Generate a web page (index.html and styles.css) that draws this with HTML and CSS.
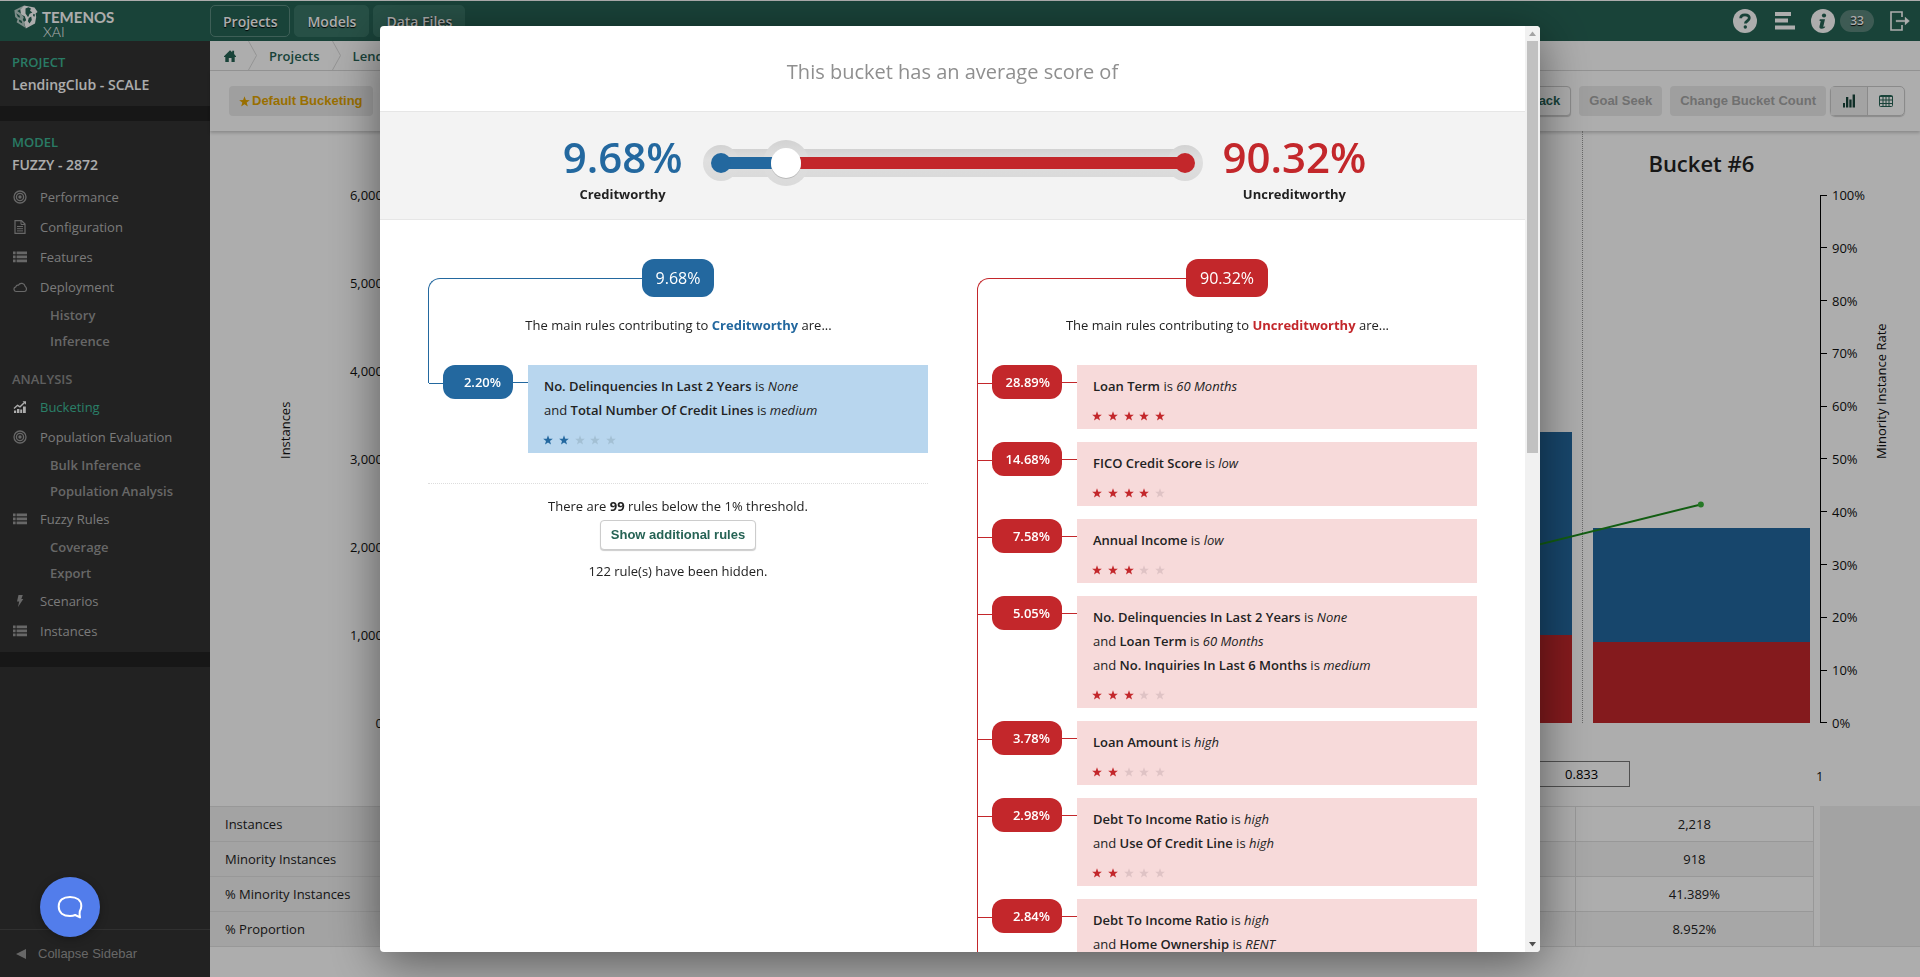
FILE: index.html
```html
<!DOCTYPE html>
<html lang="en">
<head>
<meta charset="utf-8">
<title>Temenos XAI - Bucketing</title>
<link rel="stylesheet" href="styles.css">
</head>
<body>
<svg class="sprite" aria-hidden="true">
  <symbol id="star" viewBox="0 0 20 20"><path d="M10 0.500l2.500 6.800 7.200.2-5.700 4.400 2 7L10 14.800l-6 4.100 2-7L.3 7.500l7.200-.2z"/></symbol>
  <symbol id="target" viewBox="0 0 14 14"><g fill="none" stroke="currentColor" stroke-width="1.300"><circle cx="7" cy="7" r="6"/><circle cx="7" cy="7" r="3.600"/></g><circle cx="7" cy="7" r="1.700"/></symbol>
  <symbol id="list" viewBox="0 0 14 14"><path d="M0 1.500h2.600v2.800H0zM3.600 1.500H14v2.800H3.600zM0 5.500h2.600v2.800H0zM3.600 5.500H14v2.800H3.600zM0 9.500h2.600v2.800H0zM3.600 9.500H14v2.800H3.600z"/></symbol>
  <symbol id="doc" viewBox="0 0 14 14"><path d="M2 .7h6.500L12 4v9.300H2z" fill="none" stroke="currentColor" stroke-width="1.200"/><path d="M8 .7V4.500h4M4 6.500h6M4 8.700h6M4 10.900h6" fill="none" stroke="currentColor"/></symbol>
  <symbol id="cloud" viewBox="0 0 14 14"><path d="M3 11.500a2.400 2.400 0 0 1-.2-4.700 2.300 2.300 0 0 1 2.600-1.600 3.600 3.600 0 0 1 6.700 1.200c1.200 1 1.500 2.300 1.300 3.300-.2 1.200-1 1.800-2 1.800z" fill="none" stroke="currentColor" stroke-width="1.200"/></symbol>
  <symbol id="trend" viewBox="0 0 14 14"><path d="M1 10.500h2.200V13H1zM4 9h2.400v4H4zM7.200 9.500h2V13h-2zM10 6.500h2.800V13H10z"/><path d="M1 8.500l3.500-3.200 2.500 1.500L11.500 2.500" fill="none" stroke="currentColor" stroke-width="1.400"/><path d="M9.500 1.300h3.500v3.400z"/></symbol>
  <symbol id="bolt" viewBox="0 0 14 14"><path d="M5.500 1h4.300L8.300 5h2L5 13l1.200-5.400H4z"/></symbol>
</svg>

<div class="app">
  <header class="topbar">
    <div class="brand">
      <svg class="cube" viewBox="0 0 24 24"><path fill="#fff" d="M10 .4L20.500 2.600 23.600 7l-2 1.500.6 3.500-1.200 6.500L11.800 23.500 10 17l2.200-1.800-1.500-4L7 9.500 6.200 4z"/><path fill="#266355" d="M11.500 3.500l3-1.300 2.400 1.300-.8 2.200 2.300 1.800-2.800 1.300-1.500 3.400-2.600-3.600zM14.800 13l2.400-1.600.6 3.600-2.300 3.500-1.600-2.300zM19.300 8.800l1.700.7-.5 2.200-1.400-.6z"/><path fill="#b9cfc9" d="M.4 5.200L9.500.8l-2 3-4.300 2.300 4 2.600 2.600 3.600-1 2.400 1.600 2.700.6 5.200L2.600 17.300l1-3L1.200 12z"/><path fill="#266355" d="M2.200 8.300l3.300 2.300.7 2.200-2.300-.7zM4.800 14.500l2.800 1.200.8 2.800-3-1.600z"/></svg>
      <div class="wordmark"><span class="name">TEMENOS</span><span class="product">XAI</span></div>
    </div>
    <nav class="tabs">
      <a class="tab current" href="#">Projects</a>
      <a class="tab" href="#">Models</a>
      <a class="tab" href="#">Data Files</a>
    </nav>
    <div class="tools">
      <button class="tool" aria-label="Help"><svg width="24" height="24" viewBox="0 0 24 24"><circle cx="12" cy="12" r="12" fill="#fff"/><path d="M7.700 9.300C7.700 6.700 9.600 5.800 12 5.800c2.500 0 4.300 1.200 4.300 3.300 0 3-3.900 2.700-3.900 5.400" fill="none" stroke="#266355" stroke-width="2.800"/><circle cx="12.300" cy="18" r="1.700" fill="#266355"/></svg></button>
      <button class="tool" aria-label="Log"><svg width="20" height="18" viewBox="0 0 20 18"><path fill="#fff" d="M0 0h16v4H0zM0 6.500h13v4H0zM0 13.500h20v4H0z"/></svg></button>
      <button class="tool info" aria-label="Information, 33 messages"><svg width="24" height="24" viewBox="0 0 24 24"><circle cx="12" cy="12" r="12" fill="#fff"/><circle cx="13" cy="6.500" r="2.100" fill="#266355"/><path d="M8.800 10.200h5.200l-1.700 7.200q-.2 1 1.900-.2l-.3 1.300q-2 1.400-3.600 1.300-2.300-.2-1.800-2.500l1.200-5.300H8.500z" fill="#266355"/></svg><span class="count">33</span></button>
      <button class="tool" aria-label="Log out"><svg width="20" height="20" viewBox="0 0 20 20" fill="none" stroke="#fff" stroke-width="1.600"><path d="M12 6V1H1v18h11v-5"/><path d="M6 9.200h9V6l4.500 4-4.500 4v-3.200H6z" fill="#fff" stroke-width=".3"/></svg></button>
    </div>
  </header>

  <aside class="sidebar">
    <section class="block"><h2 class="kind">PROJECT</h2><p class="title">LendingClub - SCALE</p></section>
    <section class="block model">
      <h2 class="kind">MODEL</h2><p class="title">FUZZY - 2872</p>
      <nav class="menu">
        <a href="#"><svg><use href="#target"/></svg>Performance</a>
        <a href="#"><svg><use href="#doc"/></svg>Configuration</a>
        <a href="#"><svg><use href="#list"/></svg>Features</a>
        <a href="#"><svg><use href="#cloud"/></svg>Deployment</a>
        <a class="sub" href="#">History</a>
        <a class="sub" href="#">Inference</a>
        <h2 class="group">ANALYSIS</h2>
        <a class="active" href="#"><svg><use href="#trend"/></svg>Bucketing</a>
        <a href="#"><svg><use href="#target"/></svg>Population Evaluation</a>
        <a class="sub" href="#">Bulk Inference</a>
        <a class="sub" href="#">Population Analysis</a>
        <a href="#"><svg><use href="#list"/></svg>Fuzzy Rules</a>
        <a class="sub" href="#">Coverage</a>
        <a class="sub" href="#">Export</a>
        <a href="#"><svg><use href="#bolt"/></svg>Scenarios</a>
        <a href="#"><svg><use href="#list"/></svg>Instances</a>
      </nav>
    </section>
    <button class="collapse"><svg width="10" height="10" viewBox="0 0 10 10"><path d="M0 5L10 0v10z"/></svg>Collapse Sidebar</button>
  </aside>

  <main class="main">
    <nav class="crumbs">
      <a href="#" aria-label="Home"><svg width="12" height="12" viewBox="0 0 12 12"><path d="M6 .3l2.200 2V.8h1.900v3.200L12 6.200v.8h-1.300V12H7.500V8H4.800v4H1.300V7H0v-.8z"/></svg></a>
      <svg class="sep" viewBox="0 0 9 29"><path d="M.5 0L8.500 14.500.5 29"/></svg>
      <a href="#">Projects</a>
      <svg class="sep" viewBox="0 0 9 29"><path d="M.5 0L8.500 14.500.5 29"/></svg>
      <a href="#">LendingClub - SCALE</a>
    </nav>
    <div class="toolbar">
      <button class="btn muted gold"><svg width="11" height="11"><use href="#star"/></svg>Default Bucketing</button>
      <div class="right">
        <button class="btn">Feedback</button>
        <button class="btn muted">Goal Seek</button>
        <button class="btn muted">Change Bucket Count</button>
        <div class="toggle">
          <button class="pressed" aria-label="Chart view"><svg width="14" height="14" viewBox="0 0 14 14"><path d="M1 9h2v4.500H1zM4 3h2.300v10.500H4zM7.300 5.500h2.300v8H7.300zM10.600.5H13v13h-2.400z"/></svg></button>
          <button aria-label="Table view"><svg width="14" height="14" viewBox="0 0 14 14" fill="none" stroke="currentColor"><rect x=".5" y="1.500" width="13" height="11" rx="1"/><path d="M.5 2.500h13M.5 6h13M.5 9.500h13M4 3v9.500M7 3v9.500M10 3v9.500"/></svg></button>
        </div>
      </div>
    </div>

    <section class="chart">
      <div class="axis-left"><span class="axis-name">Instances</span>
        <ul class="ticks"><li>6,000</li><li>5,000</li><li>4,000</li><li>3,000</li><li>2,000</li><li>1,000</li><li>0</li></ul>
      </div>
      <div class="buckets">
        <div class="bucket"></div><div class="bucket"></div><div class="bucket"></div><div class="bucket"></div>
        <div class="bucket"><div class="stack"><div class="major" style="height:38.450%"></div><div class="minor" style="height:16.670%"></div></div></div>
        <div class="bucket"><h3>Bucket #6</h3><div class="stack"><div class="major" style="height:21.670%"></div><div class="minor" style="height:15.300%"></div></div></div>
      </div>
      <svg class="rate" viewBox="0 0 600 100" preserveAspectRatio="none"><path d="M450 69.800L550 58.600"/><path class="dot" d="M550 58.600h.01"/></svg>
      <div class="axis-right">
        <ul class="ticks"><li>100%</li><li>90%</li><li>80%</li><li>70%</li><li>60%</li><li>50%</li><li>40%</li><li>30%</li><li>20%</li><li>10%</li><li>0%</li></ul>
        <span class="axis-name">Minority Instance Rate</span>
      </div>
      <div class="cuts"><input class="cut" aria-label="Bucket boundary" value="0.833"><span class="end">1</span></div>
    </section>

    <div class="summary">
      <table>
        <tr><th scope="row">Instances</th><td></td><td></td><td></td><td></td><td></td><td>2,218</td></tr>
        <tr><th scope="row">Minority Instances</th><td></td><td></td><td></td><td></td><td></td><td>918</td></tr>
        <tr><th scope="row">% Minority Instances</th><td></td><td></td><td></td><td></td><td></td><td>41.389%</td></tr>
        <tr><th scope="row">% Proportion</th><td></td><td></td><td></td><td></td><td></td><td>8.952%</td></tr>
      </table>
      <div class="filler"></div>
    </div>
  </main>
</div>

<div class="overlay">
  <div class="dialog" role="dialog" aria-labelledby="dlg-title">
    <div class="content">
      <h1 id="dlg-title">This bucket has an average score of</h1>
      <div class="score">
        <div class="side blue"><strong>9.68%</strong><span>Creditworthy</span></div>
        <div class="gauge">
          <svg viewBox="0 0 500 46">
            <defs><linearGradient id="g" x1="0" y1="0" x2="0" y2="1"><stop offset="0" stop-color="#d2d2d2"/><stop offset=".4" stop-color="#dfdfdf"/><stop offset="1" stop-color="#dadada"/></linearGradient></defs>
            <g fill="url(#g)"><path d="M18 9h464v28H18z"/><circle cx="18" cy="23" r="18"/><circle cx="482" cy="23" r="18"/><circle cx="83" cy="23" r="23"/></g>
            <path fill="#23689f" d="M18 17h65v12H18z"/><circle cx="18" cy="23" r="10" fill="#23689f"/>
            <path fill="#c3272b" d="M83 17h399v12H83z"/><circle cx="482" cy="23" r="10" fill="#c3272b"/>
            <circle cx="83" cy="24" r="15" fill="#bbb"/><circle cx="83" cy="23" r="15" fill="#fff"/>
          </svg>
        </div>
        <div class="side red"><strong>90.32%</strong><span>Uncreditworthy</span></div>
      </div>

      <div class="columns">
        <section class="col blue">
          <div class="total"><span>9.68%</span></div>
          <p class="lead">The main rules contributing to <b>Creditworthy</b> are...</p>
          <ul class="rules">
            <li><span class="pct">2.20%</span><div class="rule"><p><b>No. Delinquencies In Last 2 Years</b> is <i>None</i></p><p>and <b>Total Number Of Credit Lines</b> is <i>medium</i></p><div class="stars n2"><svg><use href="#star"/></svg><svg><use href="#star"/></svg><svg><use href="#star"/></svg><svg><use href="#star"/></svg><svg><use href="#star"/></svg></div></div></li>
          </ul>
          <div class="more">
            <p>There are <b>99</b> rules below the 1% threshold.</p>
            <button class="btn">Show additional rules</button>
            <p>122 rule(s) have been hidden.</p>
          </div>
        </section>

        <section class="col red">
          <div class="total"><span>90.32%</span></div>
          <p class="lead">The main rules contributing to <b>Uncreditworthy</b> are...</p>
          <ul class="rules">
            <li><span class="pct">28.89%</span><div class="rule"><p><b>Loan Term</b> is <i>60 Months</i></p><div class="stars n5"><svg><use href="#star"/></svg><svg><use href="#star"/></svg><svg><use href="#star"/></svg><svg><use href="#star"/></svg><svg><use href="#star"/></svg></div></div></li>
            <li><span class="pct">14.68%</span><div class="rule"><p><b>FICO Credit Score</b> is <i>low</i></p><div class="stars n4"><svg><use href="#star"/></svg><svg><use href="#star"/></svg><svg><use href="#star"/></svg><svg><use href="#star"/></svg><svg><use href="#star"/></svg></div></div></li>
            <li><span class="pct">7.58%</span><div class="rule"><p><b>Annual Income</b> is <i>low</i></p><div class="stars n3"><svg><use href="#star"/></svg><svg><use href="#star"/></svg><svg><use href="#star"/></svg><svg><use href="#star"/></svg><svg><use href="#star"/></svg></div></div></li>
            <li><span class="pct">5.05%</span><div class="rule"><p><b>No. Delinquencies In Last 2 Years</b> is <i>None</i></p><p>and <b>Loan Term</b> is <i>60 Months</i></p><p>and <b>No. Inquiries In Last 6 Months</b> is <i>medium</i></p><div class="stars n3"><svg><use href="#star"/></svg><svg><use href="#star"/></svg><svg><use href="#star"/></svg><svg><use href="#star"/></svg><svg><use href="#star"/></svg></div></div></li>
            <li><span class="pct">3.78%</span><div class="rule"><p><b>Loan Amount</b> is <i>high</i></p><div class="stars n2"><svg><use href="#star"/></svg><svg><use href="#star"/></svg><svg><use href="#star"/></svg><svg><use href="#star"/></svg><svg><use href="#star"/></svg></div></div></li>
            <li><span class="pct">2.98%</span><div class="rule"><p><b>Debt To Income Ratio</b> is <i>high</i></p><p>and <b>Use Of Credit Line</b> is <i>high</i></p><div class="stars n2"><svg><use href="#star"/></svg><svg><use href="#star"/></svg><svg><use href="#star"/></svg><svg><use href="#star"/></svg><svg><use href="#star"/></svg></div></div></li>
            <li><span class="pct">2.84%</span><div class="rule"><p><b>Debt To Income Ratio</b> is <i>high</i></p><p>and <b>Home Ownership</b> is <i>RENT</i></p><div class="stars n2"><svg><use href="#star"/></svg><svg><use href="#star"/></svg><svg><use href="#star"/></svg><svg><use href="#star"/></svg><svg><use href="#star"/></svg></div></div></li>
          </ul>
        </section>
      </div>
    </div>
    <div class="scrollbar" aria-hidden="true">
      <svg viewBox="0 0 15 15"><path fill="#a3a3a3" d="M7.500 5.500L11 10H4z"/></svg>
      <div class="track"><div class="thumb"></div></div>
      <svg viewBox="0 0 15 15"><path fill="#505050" d="M7.500 9.500L11 5H4z"/></svg>
    </div>
  </div>
</div>

<button class="chat" aria-label="Open chat"><svg width="26" height="24" viewBox="0 0 26 24" fill="none" stroke="#fff" stroke-width="2"><path d="M22.800 16.200c1-1.500 1.500-3.200 1.500-5.200 0-5.800-4.600-9-11.300-9S1.700 5.200 1.700 11.500 6.300 21 13 21c2 0 3.700-.3 5.200-1l4.800 2.400c-.5-2-.7-3.800-.2-6.200z" stroke-linejoin="round"/></svg></button>
</body>
</html>
```
FILE: styles.css
```css
* { box-sizing: border-box; }
body, h1, h2, h3, p, ul { margin: 0; padding: 0; }
ul { list-style: none; }
body {
  height: 100vh;
  overflow: hidden;
  font: 13px/18px "Open Sans", "Noto Sans", sans-serif;
  color: #222;
  background: #fff;
}
a { color: inherit; text-decoration: none; }
button { font: inherit; color: inherit; border: 0; background: none; padding: 0; }
svg { display: block; }
svg:not([fill]) { fill: currentColor; }
.sprite { position: absolute; width: 0; height: 0; }

.app {
  display: grid;
  grid-template: 41px minmax(0, 1fr) / 210px minmax(0, 1fr);
  height: 100vh;
}

/* top bar */
.topbar {
  grid-column: 1 / -1;
  display: flex;
  background: #266355;
  border-top: 1px solid #fff;
  color: #fff;
}
.brand { width: 210px; padding: 4px 0 0 14px; display: flex; gap: 4px; }
.cube { width: 24px; height: 24px; }
.wordmark { font-family: Lato, sans-serif; display: flex; flex-direction: column; padding-top: 4px; }
.name { font-size: 15px; line-height: 16px; font-weight: 700; }
.product { font-size: 14px; line-height: 14px; font-weight: 300; padding-left: 1px; }
.tabs { display: flex; gap: 4px; padding: 4px 0; }
.tab {
  padding: 0 12px;
  border: 1px solid #3a7768;
  border-radius: 5px;
  background: #3a7768;
  font-size: 14px;
  font-weight: 600;
  line-height: 31px;
  text-shadow: 0 1px 1px #000;
}
.tab.current { background: none; border-color: #5c8d81; }
.tools { margin-left: auto; padding-right: 10px; display: flex; align-items: center; gap: 16px; }
.tool:first-child { margin-right: 2px; }
.info { display: flex; align-items: center; gap: 5px; }
.count {
  width: 34px;
  border-radius: 11px;
  background: #5c877c;
  line-height: 22px;
  font-size: 12px;
  font-weight: 600;
  text-shadow: 0 1px 1px #000;
}

/* sidebar */
.sidebar { background: #333; display: flex; flex-direction: column; color: #b5b5b5; }
.block { padding: 10px 0; border-bottom: 15px solid #222; }
.model { padding-bottom: 6px; }
.kind, .title, .group { padding-left: 12px; line-height: 22px; }
.kind { font-size: 13px; font-weight: 600; color: #3db595; }
.title { padding-top: 1px; font-size: 14px; font-weight: 600; color: #fff; }
.menu { padding-top: 6px; display: flex; flex-direction: column; }
.menu a { height: 30px; padding-left: 13px; display: flex; align-items: center; gap: 13px; }
.menu svg { width: 14px; height: 14px; color: #9a9a9a; }
.menu .sub { height: 26px; padding-left: 50px; font-weight: 600; color: #999; }
.menu .active { color: #3ebc9a; }
.menu .active svg { color: #fff; }
.group { padding-top: 14px; padding-bottom: 2px; font-size: 13px; font-weight: 600; color: #8c8c8c; }
.collapse {
  margin-top: auto;
  height: 48px;
  border-top: 1px solid #484848;
  padding-left: 16px;
  display: flex;
  align-items: center;
  gap: 12px;
  font: 13px/18px "Liberation Sans", sans-serif;
  color: #999;
}

/* workspace */
.main { display: flex; flex-direction: column; background: #fff; }
.crumbs {
  height: 30px;
  border-bottom: 1px solid #dadada;
  padding-left: 14px;
  display: flex;
  align-items: center;
  gap: 12px;
  font-weight: 600;
  color: #266355;
}
.crumbs .sep { width: 9px; height: 29px; fill: none; stroke: #dadada; }
.toolbar {
  height: 60px;
  padding: 0 15px 0 19px;
  display: flex;
  align-items: center;
  justify-content: space-between;
  box-shadow: 0 2px 3px rgba(0, 0, 0, .2);
}
.right { display: flex; gap: 8px; }
.btn {
  height: 30px;
  padding: 0 10px;
  border: 1px solid #ccc;
  border-radius: 4px;
  box-shadow: 0 1px 1px rgba(0, 0, 0, .2);
  background: #fff;
  font: bold 13px/28px "Liberation Sans", sans-serif;
  color: #266355;
}
.btn.muted { border: 0; line-height: 30px; background: #ebebeb; box-shadow: none; color: #a5a5a5; }
.btn.gold { color: #e2a400; display: flex; align-items: center; gap: 2px; }
.toggle {
  margin-left: -4px;
  display: flex;
  border: 1px solid #ccc;
  border-radius: 5px;
  box-shadow: 0 1px 1px rgba(0, 0, 0, .2);
  color: #266355;
}
.toggle button { width: 36px; height: 28px; display: grid; place-items: center; }
.toggle .pressed { width: 37px; border-right: 1px solid #ccc; background: #f0f0f0; color: #17453a; }

.chart {
  flex: 1;
  min-height: 0;
  display: grid;
  grid-template: 64px minmax(0, 1fr) 83px / 180px minmax(0, 1fr) 100px;
  color: #111;
}
.axis-left { grid-area: 2 / 1; display: flex; justify-content: space-between; padding: 0 7px 0 66px; }
.axis-right { grid-area: 2 / 3; display: flex; justify-content: space-between; border-left: 1px solid #000; padding-right: 30px; }
.ticks { margin: -9px 0; display: flex; flex-direction: column; justify-content: space-between; text-align: right; }
.axis-right li { display: flex; align-items: center; gap: 5px; }
.axis-right li::before { content: ""; width: 6px; border-top: 1px solid #000; }
.axis-name { height: 50%; writing-mode: vertical-rl; transform: rotate(180deg); }
.buckets { grid-area: 1 / 2 / 3 / 3; display: grid; grid-template-columns: repeat(6, 1fr); }
.bucket { border-left: 1px dotted #999; display: flex; flex-direction: column; justify-content: flex-end; }
.bucket h3 { height: 64px; font-size: 22px; line-height: 64px; font-weight: 600; text-align: center; color: #222; }
.stack { flex: 0 1 calc(100% - 64px); padding: 0 10px; display: flex; flex-direction: column; justify-content: flex-end; }
.major { background: #23689f; }
.minor { background: #c3272b; }
.rate { grid-area: 2 / 2; width: 100%; height: 100%; stroke: #1b8a1b; stroke-width: 2; }
.rate path { vector-effect: non-scaling-stroke; }
.rate .dot { stroke: #39b339; stroke-width: 6; stroke-linecap: round; }
.cuts { grid-area: 3 / 2; position: relative; }
.cut {
  position: absolute;
  left: 83.33%;
  top: 38px;
  width: 96px;
  height: 26px;
  margin-left: -48px;
  border: 1px solid #777;
  background: #fff;
  font: inherit;
  text-align: center;
}
.end { position: absolute; left: 100%; top: 44px; margin-left: -4px; }

.summary { margin-bottom: 30px; display: grid; grid-template-columns: minmax(0, 1fr) 100px; gap: 6px; border-bottom: 1px solid #e0e0e0; }
.summary table { width: 100%; table-layout: fixed; border-collapse: collapse; margin-bottom: -1px; }
.summary tr { height: 35px; }
.summary tr:nth-child(even) { background: #f7f7f7; }
.summary th, .summary td { padding: 0; border: 1px solid #e0e0e0; text-align: center; font-weight: 400; }
.summary th { width: 174px; padding-left: 15px; border-left: 0; background: #f0f0f0; text-align: left; }
.filler { background: #f0f0f0; }

/* dialog */
.overlay {
  position: fixed;
  inset: 0;
  padding: 26px 20px 25px;
  display: flex;
  justify-content: center;
  background: rgba(0, 0, 0, .32);
}
.dialog {
  width: 100%;
  max-width: 1160px;
  display: flex;
  border-radius: 4px;
  overflow: hidden;
  background: #fff;
  box-shadow: 0 10px 50px rgba(0, 0, 0, .5);
}
.content { flex: 1; min-width: 0; overflow: hidden; }
.content h1 { padding: 31px 0 24px; font-size: 20px; line-height: 30px; font-weight: 400; text-align: center; color: #8f8f8f; }
.score {
  height: 109px;
  display: grid;
  grid-template-columns: 1fr 500px 1fr;
  gap: 20px;
  border: solid #e6e6e6;
  border-width: 1px 0;
  background: #f3f3f3;
}
.side { padding-top: 20px; display: flex; flex-direction: column; align-items: center; }
.side.blue { justify-self: end; }
.side.red { justify-self: start; }
.side strong { font-size: 42px; line-height: 50px; font-weight: 600; color: var(--tone); }
.side span { font-weight: 700; line-height: 24px; }
.gauge { padding-top: 28px; }
.blue { --tone: #23689f; --tint: #b8d6ee; --off: #a3c0d4; }
.red { --tone: #c3272b; --tint: #f7dada; --off: #dfc3c5; }

.columns { padding: 39px 48px 48px; display: grid; grid-template-columns: 1fr 1fr; gap: 49px; }
.total { height: 38px; display: grid; grid-template: 38px / 1fr auto 1fr; }
.total::before {
  content: "";
  height: 19px;
  margin-top: 19px;
  border: solid var(--tone);
  border-width: 1px 0 0 1px;
  border-top-left-radius: 12px;
}
.total span { padding: 0 14px; border-radius: 12px; background: var(--tone); color: #fff; font-size: 16px; line-height: 38px; }
.lead { border-left: 1px solid var(--tone); padding: 19px 0 31px; text-align: center; }
.lead b { color: var(--tone); }
.rules { display: flex; flex-direction: column; }
.rules li { display: flex; align-items: stretch; padding-bottom: 13px; border-left: 1px solid var(--tone); }
.rules li:last-child { padding-bottom: 0; }
.blue .rules li {
  border-left: 0;
  padding-left: 1px;
  background: linear-gradient(var(--tone), var(--tone)) 0 0 / 1px 18px no-repeat;
}
.rules li::before { content: ""; width: 14px; height: 18px; border-bottom: 1px solid var(--tone); }
.pct { width: 70px; height: 34px; padding-right: 12px; border-radius: 12px; background: var(--tone); color: #fff; font-weight: 600; line-height: 34px; text-align: right; }
.pct + .rule { flex: 1; margin-left: 15px; }
.rule { position: relative; padding: 9px 16px 0 15px; background: var(--tint); line-height: 24px; }
.rule p { padding-left: 1px; }
.rule::before { content: ""; position: absolute; left: -15px; top: 17px; width: 15px; border-top: 1px solid var(--tone); }
.rule b { font-weight: 600; }
.stars { width: 73px; height: 31px; padding-top: 4px; display: flex; align-items: center; justify-content: space-between; color: var(--tone); }
.stars svg { width: 10px; height: 10px; }
.n2 svg:nth-child(n+3), .n3 svg:nth-child(n+4), .n4 svg:nth-child(n+5) { color: var(--off); }
.more { margin-top: 30px; padding-top: 9px; border-top: 1px dotted #ddd; text-align: center; line-height: 26px; }
.more .btn { display: block; margin: 1px auto 8px; }

.scrollbar { width: 15px; display: flex; flex-direction: column; background: #f1f1f1; }
.track { flex: 1; padding: 0 2px; }
.thumb { height: 46%; background: #c1c1c1; }

.chat {
  position: fixed;
  left: 40px;
  bottom: 40px;
  width: 60px;
  height: 60px;
  border-radius: 50%;
  display: grid;
  place-items: center;
  background: #527deb;
  box-shadow: 0 2px 8px rgba(0, 0, 0, .3);
}
```
